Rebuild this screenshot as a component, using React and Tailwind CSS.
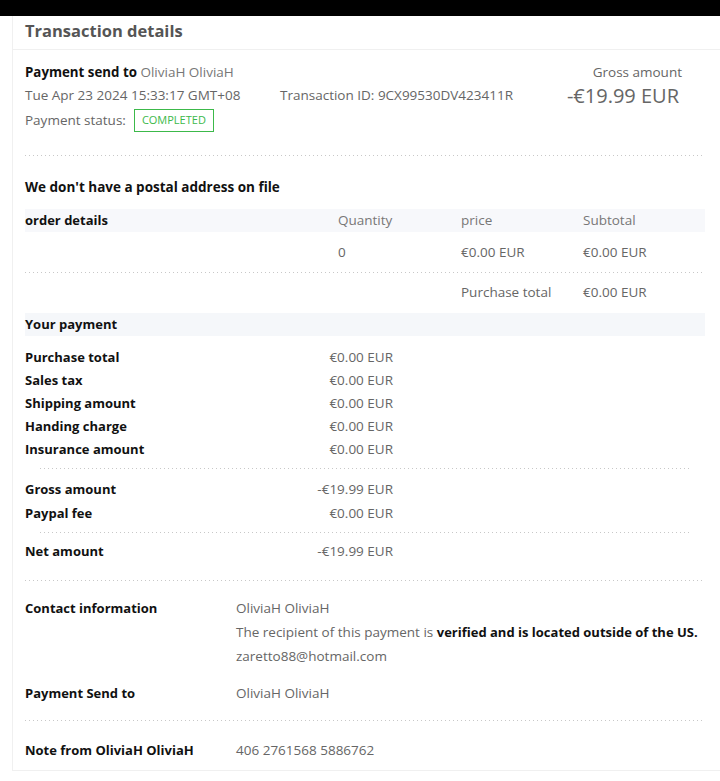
const FONT = "font-['Open_Sans','Noto_Sans',sans-serif]";

function Dots({ className = '' }) {
  return (
    <div
      className={`h-px bg-[linear-gradient(to_right,#c8c8c8_1px,transparent_1px)] bg-[length:4px_1px] ${className}`}
    />
  );
}

const payments = [
  ['Purchase total', '€0.00 EUR'],
  ['Sales tax', '€0.00 EUR'],
  ['Shipping amount', '€0.00 EUR'],
  ['Handing charge', '€0.00 EUR'],
  ['Insurance amount', '€0.00 EUR'],
];

function PayRow({ label, value }) {
  return (
    <div className="flex leading-[23px]">
      <div className="w-[250px] shrink-0 text-[13px] font-bold text-[#111]">{label}</div>
      <div className="w-[118px] shrink-0 text-right text-[#666] whitespace-nowrap">{value}</div>
    </div>
  );
}

function InfoRow({ label, children, className = '' }) {
  return (
    <div className={`flex leading-[24px] ${className}`}>
      <div className="w-[211px] shrink-0 text-[13px] font-bold text-[#111]">{label}</div>
      <div className="text-[#666]">{children}</div>
    </div>
  );
}

export default function App() {
  return (
    <div className={`min-h-[781px] bg-white text-[13.5px] ${FONT}`}>
      <div className="h-4 bg-black" />
      <div className="ml-3 border-l border-b border-[#f0f0f0]">
        {/* title */}
        <div className="h-[34px] pl-[12px] border-b border-[#f0f0f0] text-[16.5px] font-bold text-[#555] leading-[30px]">
          Transaction details
        </div>

        <div className="pl-[12px] pr-[15px]">
          {/* header */}
          <div className="flex pt-[11px] pb-[23px]">
            <div className="flex-1">
              <div className="leading-[23px]">
                <span className="text-[13.3px] font-bold text-[#111]">Payment send to</span>{' '}
                <span className="text-[#777]">OliviaH OliviaH</span>
              </div>
              <div className="flex leading-[23px] text-[#666]">
                <span className="w-[255px]">Tue Apr 23 2024 15:33:17 GMT+08</span>
                <span>Transaction ID: 9CX99530DV423411R</span>
              </div>
              <div className="flex items-center mt-[2px] text-[#666]">
                <span>Payment status:</span>
                <span className="ml-[8px] border border-[#3cb94a] text-[#3cb94a] text-[11px] h-[23px] w-[80px] flex items-center justify-center">
                  COMPLETED
                </span>
              </div>
            </div>
            <div className="w-[140px] pr-[23px] text-right text-[#666]">
              <div className="leading-[23px]">Gross amount</div>
              <div className="mr-[3px] text-[20px] leading-[23px] whitespace-nowrap">-€19.99 EUR</div>
            </div>
          </div>
          <Dots />

          {/* order */}
          <div className="pt-[20px] leading-[23px] font-bold text-[#111]">
            We don't have a postal address on file
          </div>
          <div className="mt-[10px] grid grid-cols-[313px_123px_122px_1fr] bg-[#f7f8fb] leading-[23px]">
            <div className="text-[13px] font-bold text-[#111]">order details</div>
            <div className="text-[#777]">Quantity</div>
            <div className="text-[#777]">price</div>
            <div className="text-[#777]">Subtotal</div>
          </div>
          <div className="grid grid-cols-[313px_123px_122px_1fr] leading-[23px] pt-[9px] pb-[8px] text-[#666]">
            <div />
            <div>0</div>
            <div>€0.00 EUR</div>
            <div>€0.00 EUR</div>
          </div>
          <Dots />
          <div className="grid grid-cols-[313px_123px_122px_1fr] leading-[23px] pt-[8px] pb-[9px] text-[#666]">
            <div />
            <div />
            <div>Purchase total</div>
            <div>€0.00 EUR</div>
          </div>
          <div className="bg-[#f5f7fa] leading-[23px] text-[13px] font-bold text-[#111]">Your payment</div>

          {/* payment */}
          <div className="pt-[10px]">
            {payments.map(([l, v]) => (
              <PayRow key={l} label={l} value={v} />
            ))}
          </div>
          <Dots className="mx-[15px] mt-[7px]" />
          <div className="pt-[9px]">
            <PayRow label="Gross amount" value="-€19.99 EUR" />
            <div className="mt-px">
              <PayRow label="Paypal fee" value="€0.00 EUR" />
            </div>
          </div>
          <Dots className="mx-[15px] mt-[7px]" />
          <div className="pt-[7px] pb-[17px]">
            <PayRow label="Net amount" value="-€19.99 EUR" />
          </div>
          <Dots />

          {/* contact */}
          <InfoRow label="Contact information" className="pt-[15px]">
            <div>OliviaH OliviaH</div>
            <div className="whitespace-nowrap">
              The recipient of this payment is{' '}
              <span className="text-[13px] font-bold text-[#111]">verified and is located outside of the US.</span>
            </div>
            <div>zaretto88@hotmail.com</div>
          </InfoRow>
          <InfoRow label="Payment Send to" className="pt-[13px] pb-[15px]">
            OliviaH OliviaH
          </InfoRow>
          <Dots />
          <InfoRow label="Note from OliviaH OliviaH" className="pt-[17px] pb-[8px]">
            406 2761568 5886762
          </InfoRow>
        </div>
      </div>
    </div>
  );
}
